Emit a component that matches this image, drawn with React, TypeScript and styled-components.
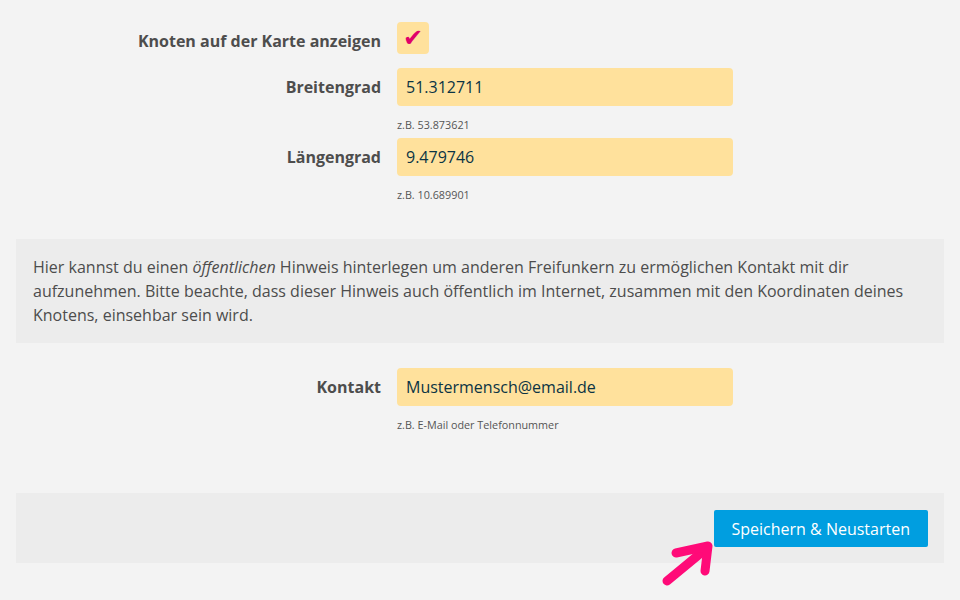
import styled, { createGlobalStyle } from 'styled-components'

const GlobalStyle = createGlobalStyle`
  html, body {
    margin: 0;
    padding: 0;
    background: #f3f3f3;
  }

  body {
    font-family: 'Open Sans', 'Noto Sans', sans-serif;
    color: #4d4d4d;
  }
`

const Page = styled.div`
  position: relative;
  width: 960px;
  height: 600px;
  padding: 22px 16px 0;
  box-sizing: border-box;
  overflow: hidden;
`

const Row = styled.div<{ $gap?: number; $top?: number }>`
  display: grid;
  grid-template-columns: 365px 336px;
  column-gap: 16px;
  align-items: start;
  margin-top: ${({ $top }) => $top ?? 0}px;
  margin-bottom: ${({ $gap }) => $gap ?? 0}px;
`

const Label = styled.label`
  text-align: right;
  font-size: 16px;
  font-weight: 700;
  line-height: 24px;
  padding-top: 7px;
  color: #4d4d4d;
`

const Field = styled.div`
  display: flex;
  flex-direction: column;
`

const Input = styled.input`
  height: 38px;
  box-sizing: border-box;
  border: none;
  border-radius: 4px;
  background: #ffe19c;
  padding: 0 9px;
  font-family: inherit;
  font-size: 16px;
  color: #0b3444;
  outline: none;
`

const Hint = styled.div`
  font-size: 10.8px;
  line-height: 16px;
  margin-top: 11px;
  color: #555;
`

const CheckBox = styled.div`
  width: 32px;
  height: 32px;
  border-radius: 4px;
  background: #ffe19c;
  display: flex;
  align-items: center;
  justify-content: center;
  color: #e0006a;
  font-family: 'DejaVu Sans', sans-serif;
  font-size: 24px;
  font-weight: 700;
  line-height: 1;
`

const Panel = styled.div`
  background: #ececec;
  padding: 16px 17px;
  font-size: 16px;
  line-height: 24px;
  color: #4d4d4d;

  em {
    font-style: italic;
  }
`

const ActionBar = styled.div`
  background: #ececec;
  height: 70px;
  box-sizing: border-box;
  padding: 17px 16px 0;
  display: flex;
  justify-content: flex-end;
  align-items: flex-start;
`

const Button = styled.button`
  height: 37px;
  padding: 0 18px;
  border: none;
  border-radius: 2px;
  background: #009ee0;
  color: #fff;
  font-family: inherit;
  font-size: 16px;
  cursor: pointer;
`

const Arrow = styled.svg`
  position: absolute;
  left: 655px;
  top: 535px;
  width: 65px;
  height: 58px;
  overflow: visible;
`

export default function App() {
  return (
    <>
      <GlobalStyle />
      <Page>
        <Row $gap={14}>
          <Label>Knoten auf der Karte anzeigen</Label>
          <CheckBox>✔</CheckBox>
        </Row>
        <Row $gap={5}>
          <Label>Breitengrad</Label>
          <Field>
            <Input defaultValue='51.312711' />
            <Hint>z.B. 53.873621</Hint>
          </Field>
        </Row>
        <Row $gap={36}>
          <Label>Längengrad</Label>
          <Field>
            <Input defaultValue='9.479746' />
            <Hint>z.B. 10.689901</Hint>
          </Field>
        </Row>
        <Panel>
          Hier kannst du einen <em>öffentlichen</em> Hinweis hinterlegen um anderen Freifunkern zu ermöglichen
          Kontakt mit dir aufzunehmen. Bitte beachte, dass dieser Hinweis auch öffentlich im Internet, zusammen mit
          den Koordinaten deines Knotens, einsehbar sein wird.
        </Panel>
        <Row $top={25} $gap={60}>
          <Label>Kontakt</Label>
          <Field>
            <Input defaultValue='Mustermensch@email.de' />
            <Hint>z.B. E-Mail oder Telefonnummer</Hint>
          </Field>
        </Row>
        <ActionBar>
          <Button>Speichern &amp; Neustarten</Button>
        </ActionBar>
        <Arrow viewBox='655 535 65 58'>
          <g fill='none' stroke='#ff0a78' strokeWidth='9' strokeLinecap='round' strokeLinejoin='round'>
            <path d='M667 581 L707 548' />
            <path d='M676 553 L708 546 L705 571' />
          </g>
        </Arrow>
      </Page>
    </>
  )
}
